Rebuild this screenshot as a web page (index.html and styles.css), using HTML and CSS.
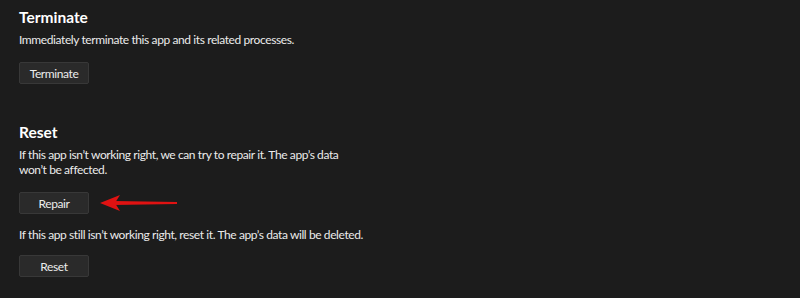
FILE: index.html
```html
<!DOCTYPE html>
<html lang="en">
<head>
  <meta charset="UTF-8">
  <title>App settings</title>
  <link rel="stylesheet" href="styles.css">
</head>
<body>

<!-- TERMINATE -->
<div class="seccion" id="terminate">
  <h2>Terminate</h2>
  <p class="desc">Immediately terminate this app and its related processes.</p>
  <div class="fila">
    <button class="boton">Terminate</button>
  </div>
</div>

<!-- RESET -->
<div class="seccion" id="reset">
  <h2>Reset</h2>
  <p class="desc">If this app isn’t working right, we can try to repair it. The app’s data won’t be affected.</p>
  <div class="fila">
    <button class="boton">Repair</button>
    <svg class="flecha" width="78" height="20" viewBox="0 0 78 20">
      <path d="M14 8 L77 9 L77 11 L14 12 Z" fill="#e01212"/>
      <path d="M0 10 L20 2 L15 10 L20 18 Z" fill="#e01212"/>
    </svg>
  </div>
  <p class="desc desc-2">If this app still isn’t working right, reset it. The app’s data will be deleted.</p>
  <div class="fila fila-2">
    <button class="boton">Reset</button>
  </div>
</div>

</body>
</html>
```

FILE: styles.css
```css
html, body {
  margin: 0;
  padding: 0;
  background: #1c1c1c;
  color: #ffffff;
  font-family: 'Lato', 'Noto Sans', sans-serif;
}

body {
  width: 800px;
  height: 298px;
  overflow: hidden;
  padding-left: 19px;
  box-sizing: border-box;
}

.seccion {
  display: flex;
  flex-direction: column;
  align-items: flex-start;
}

#terminate {
  padding-top: 7px;
}

#reset {
  padding-top: 38px;
}

h2 {
  margin: 0;
  font-size: 15.5px;
  line-height: 20px;
  font-weight: 700;
}

.desc {
  margin: 5px 0 0 0;
  font-size: 12px;
  line-height: 15px;
  letter-spacing: -0.4px;
  color: #ebebeb;
  max-width: 345px;
}

.desc-2 {
  max-width: none;
  margin-top: 13px;
}

.fila {
  display: flex;
  align-items: center;
  gap: 11px;
  margin-top: 15px;
}

.fila-2 {
  margin-top: 13px;
}

.boton {
  width: 70px;
  height: 22px;
  padding: 0;
  background: #2a2a2a;
  border: 1px solid #383838;
  border-radius: 2px;
  color: #ececec;
  font-family: inherit;
  font-size: 12px;
  letter-spacing: -0.4px;
  cursor: pointer;
}

.boton:hover {
  background: #323232;
}

.flecha {
  display: block;
}
```
